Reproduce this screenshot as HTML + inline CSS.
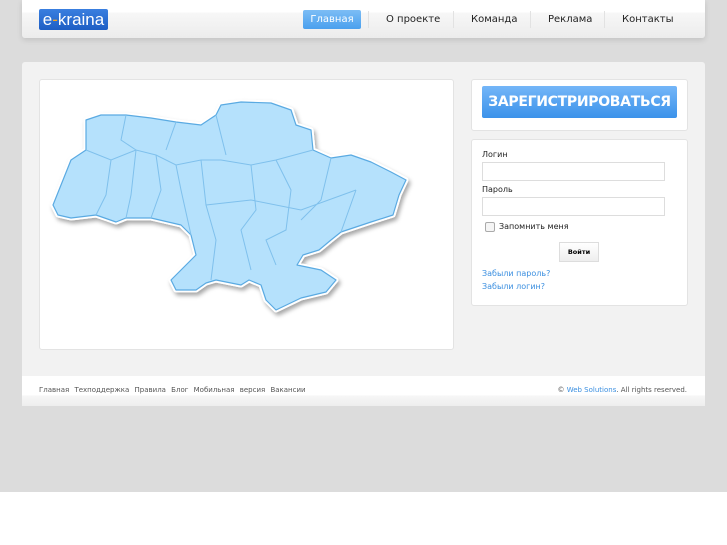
<!DOCTYPE html>
<html><head><meta charset="utf-8"><style>
body{margin:0;width:727px;height:545px;background:#fff;font-family:"DejaVu Sans","Liberation Sans",sans-serif;position:relative;overflow:hidden}
.bg{position:absolute;left:0;top:0;width:727px;height:492px;background:#dcdcdc}
.hdr{position:absolute;left:22px;top:0;width:683px;height:38px;background:linear-gradient(#fff 0,#fff 12px,#f7f7f7 13px,#ececec 38px);border-radius:0 0 3px 3px;box-shadow:0 2px 6px rgba(0,0,0,.12)}
.logo{position:absolute;left:17px;top:9px;width:69px;height:21px;background:linear-gradient(#3a7fe0,#1e5ec4);border-radius:2px;color:#fff;font:17px/21px "Liberation Sans",sans-serif;text-align:center;white-space:nowrap;overflow:hidden}
.logo b{color:#f5a623;font-weight:normal}
.nav{position:absolute;top:10px;font-size:10px;color:#222;height:19px;line-height:19px;white-space:nowrap}
.act{background:linear-gradient(#7cbdf5,#4aa0ee);color:#fff;border-radius:2px;text-align:center}
.sep{position:absolute;top:11px;width:1px;height:17px;background:#e2e2e2}
.main{position:absolute;left:22px;top:62px;width:683px;height:314px;background:#f2f2f2;border-radius:3px 3px 0 0}
.box{position:absolute;background:#fff;border:1px solid #e3e3e3;border-radius:3px}
.reg{position:absolute;left:10px;top:6px;width:195px;height:32px;background:linear-gradient(#74b6f8,#3b92ea);border-radius:2px;color:#fff;font-weight:bold;font-size:14px;line-height:32px;text-align:center;letter-spacing:-.3px;white-space:nowrap;overflow:hidden}
.lbl{position:absolute;left:10px;font-size:8px;color:#222}
.inp{position:absolute;left:10px;width:181px;height:17px;border:1px solid #ddd;background:#fff}
.lnk{position:absolute;left:10px;font-size:8px;color:#3b8fe0}
.ftr{position:absolute;left:22px;top:376px;width:683px;height:30px;background:linear-gradient(#fff 0,#fff 19px,#f6f6f6 20px,#eee 30px)}
.ft{position:absolute;top:10px;font-size:7px;color:#555;word-spacing:3px;white-space:nowrap}
</style></head><body>
<div class="bg"></div>
<div class="hdr">
<div class="logo">e<b>-</b>kraina</div>
<div class="nav act" style="left:281px;width:58px">Главная</div>
<div class="sep" style="left:346px"></div>
<div class="nav" style="left:364px">О проекте</div>
<div class="sep" style="left:431px"></div>
<div class="nav" style="left:449px">Команда</div>
<div class="sep" style="left:508px"></div>
<div class="nav" style="left:526px">Реклама</div>
<div class="sep" style="left:582px"></div>
<div class="nav" style="left:600px">Контакты</div>
</div>
<div class="main">
<div class="box" style="left:17px;top:17px;width:413px;height:269px">
<svg width="413" height="269" viewBox="39 80 413 269" style="position:absolute;left:0;top:0">
<defs><filter id="s"><feDropShadow dx="2" dy="3" stdDeviation="2" flood-opacity=".35"/></filter></defs>
<polygon filter="url(#s)" fill="#b5e1fc" stroke="#fff" stroke-width="5" stroke-linejoin="round" points="52,205 70,160 85,150 85,120 100,115 125,115 150,118 175,122 200,125 215,115 220,105 240,102 270,103 290,110 295,125 310,130 312,150 330,158 350,155 370,162 390,172 405,180 398,195 392,215 370,222 340,232 330,240 318,250 302,255 296,265 320,270 335,280 325,292 300,298 275,310 265,300 260,285 248,280 240,285 215,280 205,283 195,290 175,290 170,280 185,265 195,255 190,235 180,225 150,218 125,218 115,222 95,215 70,218 57,215"/>
<polygon fill="#b5e1fc" stroke="#5aaae2" stroke-width="1.2" stroke-linejoin="round" points="52,205 70,160 85,150 85,120 100,115 125,115 150,118 175,122 200,125 215,115 220,105 240,102 270,103 290,110 295,125 310,130 312,150 330,158 350,155 370,162 390,172 405,180 398,195 392,215 370,222 340,232 330,240 318,250 302,255 296,265 320,270 335,280 325,292 300,298 275,310 265,300 260,285 248,280 240,285 215,280 205,283 195,290 175,290 170,280 185,265 195,255 190,235 180,225 150,218 125,218 115,222 95,215 70,218 57,215"/>
<g fill="none" stroke="#7fc0ec" stroke-width="1">
<path d="M85,150 110,160 135,150 155,155 175,165 200,160 220,160 250,165 275,160 312,150"/>
<path d="M110,160 105,195 95,215 M135,150 130,195 125,218 M155,155 160,190 150,218 M175,165 180,190 190,235 M200,160 205,205 215,240 210,280 M250,165 255,210 240,230 250,270 M275,160 290,190 285,230 265,240 275,265 M330,158 320,200 300,220 M355,190 340,232 M205,205 250,200 300,210 355,190 M125,115 120,140 135,150 M175,122 165,150 M215,115 225,155"/>
</g></svg>
</div>
<div class="box" style="left:449px;top:17px;width:215px;height:50px"><div class="reg">ЗАРЕГИСТРИРОВАТЬСЯ</div></div>
<div class="box" style="left:449px;top:77px;width:215px;height:165px">
<div class="lbl" style="top:10px">Логин</div>
<div class="inp" style="top:22px"></div>
<div class="lbl" style="top:45px">Пароль</div>
<div class="inp" style="top:57px"></div>
<div style="position:absolute;left:13px;top:82px;width:8px;height:8px;border:1px solid #aaa;border-radius:2px;background:#f5f5f5"></div>
<div class="lbl" style="left:27px;top:82px">Запомнить меня</div>
<div style="position:absolute;left:87px;top:102px;width:38px;height:18px;border:1px solid #ddd;background:linear-gradient(#fff,#eee);font-size:6.5px;font-weight:bold;text-align:center;line-height:18px">Войти</div>
<div class="lnk" style="top:129px">Забыли пароль?</div>
<div class="lnk" style="top:142px">Забыли логин?</div>
</div>
</div>
<div class="ftr">
<div class="ft" style="left:17px">Главная Техподдержка Правила Блог Мобильная версия Вакансии</div>
<div class="ft" style="right:18px;word-spacing:0">© <span style="color:#3b8fe0">Web Solutions</span>. All rights reserved.</div>
</div>
</body></html>
